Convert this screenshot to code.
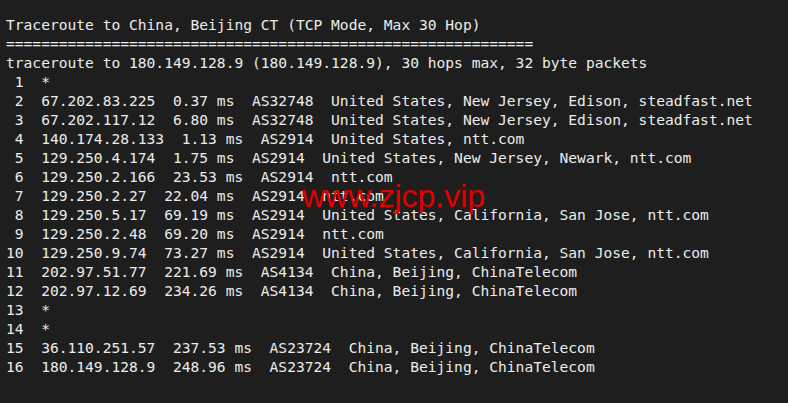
const lines = [
  "Traceroute to China, Beijing CT (TCP Mode, Max 30 Hop)",
  "============================================================",
  "traceroute to 180.149.128.9 (180.149.128.9), 30 hops max, 32 byte packets",
  " 1  *",
  " 2  67.202.83.225  0.37 ms  AS32748  United States, New Jersey, Edison, steadfast.net",
  " 3  67.202.117.12  6.80 ms  AS32748  United States, New Jersey, Edison, steadfast.net",
  " 4  140.174.28.133  1.13 ms  AS2914  United States, ntt.com",
  " 5  129.250.4.174  1.75 ms  AS2914  United States, New Jersey, Newark, ntt.com",
  " 6  129.250.2.166  23.53 ms  AS2914  ntt.com",
  " 7  129.250.2.27  22.04 ms  AS2914  ntt.com",
  " 8  129.250.5.17  69.19 ms  AS2914  United States, California, San Jose, ntt.com",
  " 9  129.250.2.48  69.20 ms  AS2914  ntt.com",
  "10  129.250.9.74  73.27 ms  AS2914  United States, California, San Jose, ntt.com",
  "11  202.97.51.77  221.69 ms  AS4134  China, Beijing, ChinaTelecom",
  "12  202.97.12.69  234.26 ms  AS4134  China, Beijing, ChinaTelecom",
  "13  *",
  "14  *",
  "15  36.110.251.57  237.53 ms  AS23724  China, Beijing, ChinaTelecom",
  "16  180.149.128.9  248.96 ms  AS23724  China, Beijing, ChinaTelecom",
];

export default function App() {
  return (
    <div className="relative w-[788px] h-[403px] overflow-hidden bg-[#1e1e1e]">
      <div className="pt-[15px] pl-[6px] font-['DejaVu_Sans_Mono',monospace] text-[14.6px] leading-[19px] text-[#ececec]">
        {lines.map((line, i) => (
          <div key={i} className="whitespace-pre">
            {line}
          </div>
        ))}
      </div>
      {/* watermark */}
      <div className="absolute left-[302px] top-[178px] font-['Liberation_Sans',Arial,sans-serif] text-[32px] leading-[36px] text-[#e00000]">
        www.zjcp.vip
      </div>
    </div>
  );
}
